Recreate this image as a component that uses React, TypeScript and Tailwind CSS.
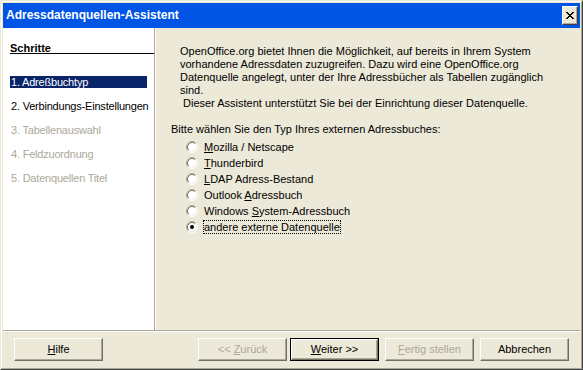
import React from "react"

function Radio({ checked }: { checked?: boolean }) {
    return (
        <svg width="12" height="12" viewBox="0 0 12 12" className="shrink-0">
            <circle cx="6" cy="6" r="5" fill="#ffffff" />
            <path d="M2.11 9.89 A5.5 5.5 0 0 1 9.89 2.11" fill="none" stroke="#aca899" strokeWidth="1" />
            <path d="M9.89 2.11 A5.5 5.5 0 0 1 2.11 9.89" fill="none" stroke="#ffffff" strokeWidth="1" />
            <path d="M2.82 9.18 A4.5 4.5 0 0 1 9.18 2.82" fill="none" stroke="#716f64" strokeWidth="1" />
            <path d="M9.18 2.82 A4.5 4.5 0 0 1 2.82 9.18" fill="none" stroke="#f1efe2" strokeWidth="1" />
            {checked && <circle cx="6" cy="6" r="2" fill="#000000" />}
        </svg>
    )
}

function Btn({ children, disabled, isDefault, className = "" }: { children: React.ReactNode, disabled?: boolean, isDefault?: boolean, className?: string }) {
    const inner = (
        <div className={`h-full w-full flex items-center justify-center border border-t-white border-l-white border-r-[#716f64] border-b-[#716f64] shadow-[inset_-1px_-1px_0_#aca899] ${disabled ? "text-[#aca899]" : "text-black"}`}>
            {children}
        </div>
    )
    return isDefault ? (
        <div className={`w-[89px] h-[23px] border border-black ${className}`}>{inner}</div>
    ) : (
        <div className={`w-[89px] h-[23px] ${className}`}>{inner}</div>
    )
}

const steps = [
    { label: "1. Adreßbuchtyp", state: "active" },
    { label: "2. Verbindungs-Einstellungen", state: "enabled" },
    { label: "3. Tabellenauswahl", state: "disabled" },
    { label: "4. Feldzuordnung", state: "disabled" },
    { label: "5. Datenquellen Titel", state: "disabled" },
]

export default function App() {
    return (
        <div className="w-[583px] h-[370px] bg-[#ece9d8] border border-t-[#ece9d8] border-l-[#ece9d8] border-r-[#404040] border-b-[#404040] font-['Liberation_Sans',Arial,sans-serif] text-[11px] leading-[13px] text-black">
            <div className="h-full flex flex-col border border-t-white border-l-white border-r-[#aca899] border-b-[#aca899] p-px">
                {/* title bar */}
                <div className="h-[25px] shrink-0 bg-[#0055e5] flex items-center justify-between pl-[3px] pr-[2px]">
                    <span className="text-white font-bold text-[12px] leading-[15px]">Adressdatenquellen-Assistent</span>
                    <div className="w-[16px] h-[19px] bg-[#ece9d8] border border-t-white border-l-white border-r-[#404040] border-b-[#404040] shadow-[inset_-1px_-1px_0_#aca899] flex items-center justify-center">
                        <svg width="8" height="7" viewBox="0 0 8 7" shapeRendering="crispEdges">
                            <path d="M0 0h2v1h-2zM6 0h2v1h-2zM1 1h2v1h-2zM5 1h2v1h-2zM2 2h4v1h-4zM3 3h2v1h-2zM2 4h4v1h-4zM1 5h2v1h-2zM5 5h2v1h-2zM0 6h2v1h-2zM6 6h2v1h-2z" fill="#000" />
                        </svg>
                    </div>
                </div>

                {/* content */}
                <div className="h-[302px] shrink-0 flex">
                    <div className="w-[152px] bg-white border-r border-r-[#aca899]">
                        <div className="ml-[7px] mt-[14px] h-[12px] border-b border-black font-bold leading-[12px]">Schritte</div>
                        <div className="mt-[22px] ml-[7px] flex flex-col gap-[12px]">
                            {steps.map(s => (
                                <div
                                    key={s.label}
                                    className={`w-[137px] h-[12px] leading-[12px] px-px whitespace-nowrap tracking-[-0.2px] ${s.state === "active" ? "bg-[#0a246a] text-white" : s.state === "enabled" ? "text-black" : "text-[#aca899]"}`}
                                >
                                    {s.label}
                                </div>
                            ))}
                        </div>
                    </div>
                    <div className="flex-1 border-l border-l-white pt-[17px]">
                        <div className="pl-[24px] whitespace-nowrap">
                            <div>OpenOffice.org bietet Ihnen die Möglichkeit, auf bereits in Ihrem System</div>
                            <div>vorhandene Adressdaten zuzugreifen. Dazu wird eine OpenOffice.org</div>
                            <div>Datenquelle angelegt, unter der Ihre Adressbücher als Tabellen zugänglich</div>
                            <div>sind.</div>
                            <div className="pl-[3px]">Dieser Assistent unterstützt Sie bei der Einrichtung dieser Datenquelle.</div>
                        </div>
                        <div className="pl-[15px] mt-[13px] whitespace-nowrap">Bitte wählen Sie den Typ Ihres externen Adressbuches:</div>
                        <div className="pl-[30px] mt-[3px] flex flex-col">
                            <div className="h-[16px] flex items-center gap-[5px]"><Radio /><span className="ml-px"><u>M</u>ozilla / Netscape</span></div>
                            <div className="h-[16px] flex items-center gap-[5px]"><Radio /><span className="ml-px"><u>T</u>hunderbird</span></div>
                            <div className="h-[16px] flex items-center gap-[5px]"><Radio /><span className="ml-px"><u>L</u>DAP Adress-Bestand</span></div>
                            <div className="h-[16px] flex items-center gap-[5px]"><Radio /><span className="ml-px">Outlook <u>A</u>dressbuch</span></div>
                            <div className="h-[16px] flex items-center gap-[5px]"><Radio /><span className="ml-px">Windows <u>S</u>ystem-Adressbuch</span></div>
                            <div className="h-[16px] flex items-center gap-[5px]"><Radio checked /><span className="border border-dotted border-black leading-[12px]">andere externe Datenquelle</span></div>
                        </div>
                    </div>
                </div>

                {/* separator */}
                <div className="h-px bg-[#aca899] shrink-0" />
                <div className="h-px bg-white shrink-0" />

                {/* footer */}
                <div className="flex-1 flex items-start pt-[6px] pl-[11px] pr-[11px]">
                    <Btn><span><u>H</u>ilfe</span></Btn>
                    <Btn disabled className="ml-auto"><span>&lt;&lt; <u>Z</u>urück</span></Btn>
                    <Btn isDefault className="ml-[3px]"><span><u>W</u>eiter &gt;&gt;</span></Btn>
                    <Btn disabled className="ml-[6px]"><span><u>F</u>ertig stellen</span></Btn>
                    <Btn className="ml-[6px]"><span>Abbrechen</span></Btn>
                </div>
            </div>
        </div>
    )
}
